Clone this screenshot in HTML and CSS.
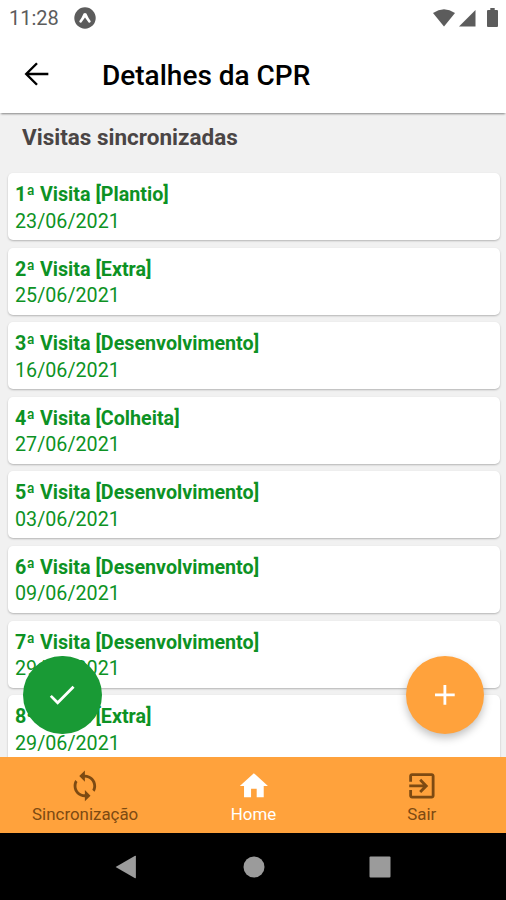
FILE: index.html
```html
<!DOCTYPE html>
<html lang="pt-BR">

<head>
    <meta charset="UTF-8">
    <meta name="viewport" content="width=device-width, initial-scale=1.0">
    <title>Detalhes da CPR</title>
    <link rel="stylesheet" href="styles.css">
</head>

<body>
    <!-- Status bar -->
    <div class="status-bar">
        <span class="clock">11:28</span>
        <svg class="expo" viewBox="0 0 22 22">
            <circle cx="11" cy="11" r="10.7" fill="#5c5c5c" />
            <path d="M9.6 6.6Q11 5.2 12.4 6.6Q14.2 11 16.8 14.2Q16.4 16.2 14.6 15.4Q12.6 12.6 11 10.4Q9.4 12.6 7.4 15.4Q5.6 16.2 5.2 14.2Q7.8 11 9.6 6.6z" fill="#fff" />
        </svg>
        <div class="status-icons">
            <svg width="22" height="18" viewBox="0 0 22 18"><path d="M0 4 Q11 -3.4 22 4 L11 17.5z" /></svg>
            <svg width="17" height="18" viewBox="0 0 17 18"><path d="M16.5 1v16.5H0z" /></svg>
            <svg class="battery" width="11" height="19" viewBox="0 0 11 19"><path d="M3.3 0h4.4v2H10q1 0 1 1v15q0 1-1 1H1q-1 0-1-1V3q0-1 1-1h2.3z" /></svg>
        </div>
    </div>

    <header class="header">
        <svg class="back" viewBox="0 0 24 24" fill="none" stroke="#000" stroke-width="1.7"><path d="M20 12H5.2M12 4.4L4.4 12l7.6 7.6" /></svg>
        <h1>Detalhes da CPR</h1>
    </header>

    <main class="content">
        <h2>Visitas sincronizadas</h2>
        <div class="visits">
            <div class="card"><strong>1ª Visita [Plantio]</strong><span>23/06/2021</span></div>
            <div class="card"><strong>2ª Visita [Extra]</strong><span>25/06/2021</span></div>
            <div class="card"><strong>3ª Visita [Desenvolvimento]</strong><span>16/06/2021</span></div>
            <div class="card"><strong>4ª Visita [Colheita]</strong><span>27/06/2021</span></div>
            <div class="card"><strong>5ª Visita [Desenvolvimento]</strong><span>03/06/2021</span></div>
            <div class="card"><strong>6ª Visita [Desenvolvimento]</strong><span>09/06/2021</span></div>
            <div class="card"><strong>7ª Visita [Desenvolvimento]</strong><span>29/06/2021</span></div>
            <div class="card"><strong>8ª Visita [Extra]</strong><span>29/06/2021</span></div>
        </div>

        <!-- Floating buttons -->
        <div class="fab fab-check">
            <svg class="icon" viewBox="0 0 24 24"><path d="M9 16.17L4.83 12l-1.42 1.41L9 19 21 7l-1.41-1.41z" /></svg>
        </div>
        <div class="fab fab-add">
            <svg class="icon" viewBox="0 0 24 24"><path d="M19 13h-6v6h-2v-6H5v-2h6V5h2v6h6v2z" /></svg>
        </div>
    </main>

    <nav class="tabs">
        <div class="tab">
            <svg class="icon" viewBox="0 0 24 24"><path d="M12 4V1L8 5l4 4V6c3.31 0 6 2.69 6 6 0 1.01-.25 1.97-.7 2.8l1.46 1.46C19.54 15.03 20 13.57 20 12c0-4.42-3.58-8-8-8zm0 14c-3.31 0-6-2.69-6-6 0-1.01.25-1.97.7-2.8L5.24 7.74C4.46 8.97 4 10.43 4 12c0 4.42 3.58 8 8 8v3l4-4-4-4v3z" /></svg>
            <span>Sincronização</span>
        </div>
        <div class="tab active">
            <svg class="icon" viewBox="0 0 24 24"><path d="M10 20v-6h4v6h5v-8h3L12 3 2 12h3v8z" /></svg>
            <span>Home</span>
        </div>
        <div class="tab">
            <svg class="icon" viewBox="0 0 24 24"><path d="M10.09 15.59L11.5 17l5-5-5-5-1.41 1.41L12.67 11H3v2h9.67l-2.58 2.59zM19 3H5c-1.11 0-2 .9-2 2v4h2V5h14v14H5v-4H3v4c0 1.1.89 2 2 2h14c1.1 0 2-.9 2-2V5c0-1.1-.9-2-2-2z" /></svg>
            <span>Sair</span>
        </div>
    </nav>

    <!-- Android navigation -->
    <div class="android-nav">
        <svg viewBox="0 0 24 24"><path d="M.6 12L20.1 .8q.8-.3.8.6v21.2q0 .9-.8.6z" /></svg>
        <svg viewBox="0 0 24 24"><circle cx="12" cy="12" r="10.5" /></svg>
        <svg viewBox="0 0 24 24"><rect x="1.5" y="1.5" width="21" height="21" rx="1" /></svg>
    </div>
</body>

</html>
```

FILE: styles.css
```css
* {
    box-sizing: border-box;
}

body {
    display: flex;
    flex-direction: column;
    height: 900px;
    margin: 0;
    overflow: hidden;
    background-color: #fff;
    font-family: Roboto, sans-serif;
}

svg {
    display: block;
    flex-shrink: 0;
}

.status-bar {
    display: flex;
    align-items: center;
    height: 35px;
    padding: 0 8px 0 9px;
    color: #5c5c5c;
}

.clock {
    width: 65px;
    font-size: 20px;
    line-height: 24px;
}

.expo {
    width: 22px;
    height: 22px;
}

.status-icons {
    display: flex;
    align-items: center;
    gap: 4px;
    margin-left: auto;
    fill: #5c5c5c;
}

.battery {
    margin-left: 7px;
}

.header {
    display: flex;
    align-items: center;
    height: 78px;
    padding: 0 20px 1px;
    z-index: 1;
    background-color: #fff;
    box-shadow: 0 2px 2px -1px rgba(0, 0, 0, 0.45);
}

.back {
    width: 34px;
    height: 34px;
}

h1 {
    margin: 5px 0 0 48px;
    font-size: 28px;
    font-weight: 500;
    line-height: 34px;
}

.content {
    position: relative;
    flex: 1;
    min-height: 0;
    overflow: hidden;
    background-color: #f1f1f1;
}

h2 {
    margin: 10px 0 21px 22px;
    color: #4a4545;
    font-size: 22.5px;
    font-weight: 700;
    line-height: 29px;
}

.visits {
    display: flex;
    flex-direction: column;
    gap: 7.6px;
    padding: 0 6px 0 8px;
}

.card {
    display: flex;
    flex-direction: column;
    flex-shrink: 0;
    height: 67px;
    padding: 9px 7px 7px;
    border-radius: 5px;
    background-color: #fff;
    box-shadow: 0 1px 2px rgba(0, 0, 0, 0.25);
    color: #0d9224;
    font-size: 19.7px;
    line-height: 26.5px;
}

.card strong {
    font-weight: 700;
}

.fab {
    position: absolute;
    bottom: 23px;
    display: flex;
    align-items: center;
    justify-content: center;
    width: 78.5px;
    height: 78.5px;
    border-radius: 50%;
    color: #fff;
}

.fab-check {
    left: 23px;
    background-color: #199a35;
}

.fab-add {
    right: 22px;
    background-color: #ffa23c;
    box-shadow: 0 4px 8px rgba(0, 0, 0, 0.25);
}

.icon {
    width: 33.75px;
    height: 33.75px;
    fill: currentColor;
}

.tabs {
    display: flex;
    height: 76px;
    padding: 12px 0 0 1px;
    background-color: #ffa23c;
}

.tab {
    display: flex;
    flex: 1;
    flex-direction: column;
    align-items: center;
    color: #7d4a12;
    font-size: 16.9px;
    line-height: 22.5px;
}

.tab.active {
    color: #fff;
}

.android-nav {
    display: flex;
    align-items: center;
    justify-content: center;
    gap: 102.5px;
    height: 67px;
    padding-left: 1px;
    background-color: #000;
    fill: #9b9b9b;
}

.android-nav svg {
    width: 24px;
    height: 24px;
}
```
